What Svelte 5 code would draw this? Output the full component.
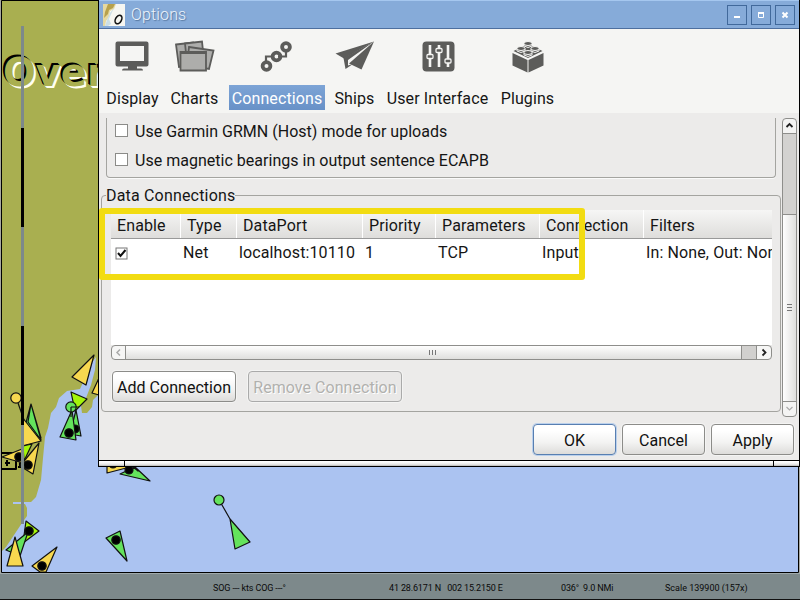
<script>
  const tabs = [
    { label: 'Display', icon: 'display', w: 55 },
    { label: 'Charts', icon: 'charts', w: 51 },
    { label: 'Connections', icon: 'connections', w: 96 },
    { label: 'Ships', icon: 'ships', w: 41 },
    { label: 'User Interface', icon: 'ui', w: 107 },
    { label: 'Plugins', icon: 'plugins', w: 55 }
  ];
  const active = 'Connections';
  const columns = [
    { name: 'Enable', value: '', w: 70 },
    { name: 'Type', value: 'Net', w: 56 },
    { name: 'DataPort', value: 'localhost:10110', w: 126 },
    { name: 'Priority', value: '1', w: 73 },
    { name: 'Parameters', value: 'TCP', w: 104 },
    { name: 'Connection', value: 'Input', w: 104 },
    { name: 'Filters', value: 'In: None, Out: None', w: 160 }
  ];
  const options = [
    'Use Garmin GRMN (Host) mode for uploads',
    'Use magnetic bearings in output sentence ECAPB'
  ];
</script>

<div class="screen">
  <svg class="map" width="800" height="573" viewBox="0 0 800 573">
    <rect width="800" height="573" fill="#a8a8a0" />
    <rect x="1" y="0" width="798" height="573" fill="#abc3f1" />
    <path fill="#a9af50" d="M1 0H99V394L93 400L92 407L87 413H82L81 406L86 398L91 385L95 370L96 357L91 364L86 376L80 389L67 391L59 398L56 407L51 413L48 428L45 437L43 458L41 480L36 497L31 502H13V504H25L27 508V516L22 523L14 535L6 547L1 552Z" />
    <g stroke="#111" stroke-width="1.2" stroke-linejoin="round">
      <g fill="none" stroke="#000" stroke-width="2"><path d="M2 453H16V469H2M5 463H10M7 460V466M20 466Q19 460 24 462M18 467H22" /></g>
      <path fill="#64e35c" d="M31 404L41 438L24 430ZM31 404L41 440L28 422Z" />
      <path fill="#f7d84f" d="M94 355L72 377L86 385ZM99 378L92 393L99 395Z" />
      <path fill="#a4f50b" d="M71 392L87 399L75 411Z" />
      <path fill="#64e35c" d="M76 410L81 436L70 434Z" /><circle cx="75" cy="429" r="4" fill="#000" />
      <path fill="#64e35c" d="M72 410L60 437L76 440Z" /><circle cx="69" cy="433" r="4.2" fill="#000" />
      <circle cx="71" cy="407" r="5.2" fill="#64e35c" /><path d="M71 407H79M71 407V417" />
      <path d="M18 403L24 420" /><circle cx="16" cy="398" r="5.2" fill="#f7d84f" />
      <path fill="#f7d84f" d="M22 417L41 441L22 446Z" />
      <path fill="#f7d84f" d="M39 443L33 474L20 466Z" />
      <path fill="#a4f50b" d="M23 446L32 444L24 461Z" />
      <path fill="#f7d84f" d="M2 457L22 449L23 463Z" />
      <circle cx="19" cy="457" r="4.2" fill="#000" /><circle cx="28" cy="465" r="4.2" fill="#000" />
      <path fill="#f7d84f" d="M107 460V473L130 467Z" /><circle cx="113" cy="464" r="4" fill="#000" />
      <path fill="#64e35c" d="M120 474L135 467L150 481ZM132 466L138 471Z" /><circle cx="129" cy="470" r="4" fill="#000" />
      <path fill="#64e35c" d="M222 505L230 519L250 542L235 549L230 519Z" /><circle cx="219" cy="500" r="5" fill="#64e35c" />
      <path fill="#64e35c" d="M120 531L106 538L127 561Z" /><circle cx="116" cy="540" r="4.2" fill="#000" />
      <path fill="#a4f50b" d="M26 521L39 531L23 543Z" />
      <path fill="#64e35c" d="M28 532L6 550L20 556Z" /><circle cx="29" cy="531" r="4.2" fill="#000" />
      <path fill="#f7d84f" d="M15 537L7 566H23Z" />
      <path fill="#f7d84f" d="M57 547L32 566L40 572H46Z" /><circle cx="42" cy="566" r="4.2" fill="#000" />
    </g>
    <path d="M1.5 572.5V.5H798.5V572.5Z" fill="none" stroke="#000" />
  </svg>
  <div class="place">Over</div>
  <svg class="scalebar" width="3" height="498">
    <rect width="3" height="498" fill="#7d898b" />
    <rect y="102" width="3" height="99" /><rect y="300" width="3" height="99" />
  </svg>

  <footer>
    <span class="sog">SOG --- kts COG ---°</span>
    <span class="pos">41 28.6171 N&nbsp;&nbsp; 002 15.2150 E</span>
    <span class="brg">036°&nbsp; 9.0 NMi</span>
    <span class="scale">Scale 139900 (157x)</span>
  </footer>

  <section class="window">
    <header>
      <svg class="logo" width="22" height="22" viewBox="0 0 22 22">
        <rect width="22" height="22" fill="#f6f6f1" />
        <path d="M0 0H13L11 5L7 7L6 13L3 17L2 22H0Z" fill="#e5d9a2" />
        <path d="M5 0H12L10 4L6 6L5 10L1 14L2 8Z" fill="#b7a14c" />
        <path d="M12 3L9 8L6 15L8 20L5 22H2L4 16L7 9Z" fill="#cbdfe6" />
        <ellipse cx="15.500" cy="15.500" rx="3" ry="4.600" transform="rotate(28 15.500 15.500)" fill="none" stroke="#111" stroke-width="1.6" />
      </svg>
      <span class="title">Options</span>
      <div class="controls">
        <button aria-label="Minimize"><svg width="18" height="18"><path d="M6 11H12" stroke="#fff" stroke-width="2" /></svg></button>
        <button aria-label="Maximize"><svg width="18" height="18"><path d="M6.5 7V11.5H11.5V7M6 7H12" fill="none" stroke="#fff" /><path d="M6 7H12" stroke="#fff" stroke-width="2" /></svg></button>
        <button aria-label="Close"><svg width="18" height="18"><path d="M6.5 6.5L11.5 11.5M11.5 6.5L6.5 11.5" stroke="#fff" stroke-width="2" /></svg></button>
      </div>
    </header>

    <nav>
      {#each tabs as tab}
        <div class="tab" style="width:{tab.w}px">
          <svg width="40" height="36" viewBox="0 0 40 36" fill="#5c5c5a">
            {#if tab.icon === 'display'}
              <path fill-rule="evenodd" d="M4.500 2.500H33.500Q35.500 2.500 35.500 4.500V25.500Q35.500 27.500 33.500 27.500H24V29.500H28Q30 29.500 30 31.500H9Q9 29.500 11 29.500H15V27.500H4.500Q2.500 27.500 2.500 25.500V4.500Q2.500 2.500 4.500 2.500ZM7 7V22H31V7Z" />
            {:else if tab.icon === 'charts'}
              <g fill="#adadab" stroke="#5c5c5a" stroke-width="1.800">
                <path d="M1 5.500L18 3.500L20 26L4 28Z" /><path d="M10 4.500L27 2.500L28 12L11 14Z" /><path d="M14 8L38.500 11.500L34 30L12 26Z" />
                <path d="M5.500 13H31V31.500H5.500Z" /><path d="M5 13.500H31.500" stroke-width="3" />
              </g>
            {:else if tab.icon === 'connections'}
              <g fill="none" stroke="#5c5c5a" stroke-width="3.8">
                <path d="M9 23V17.500H15M21 17.500H29V12" stroke-width="2.2" />
                <circle cx="9.500" cy="27" r="3.900" /><circle cx="19.500" cy="17.500" r="3.900" /><circle cx="29" cy="8" r="3.900" />
              </g>
            {:else if tab.icon === 'ships'}
              <path d="M39 2.500L.5 14.500L9 19.500Z" /><path d="M39 2.500L8.500 19L10.500 30L18 25L13 26.500L13 21Z" /><path d="M39 2.500L26.500 30.500L14 24.500Z" />
            {:else if tab.icon === 'ui'}
              <rect x="4.500" y="2.500" width="32" height="30" rx="4" />
              <path d="M12 6V28M21 6V28M30 6V28" stroke="#f5f5f3" stroke-width="2.600" />
              <g fill="#5c5c5a" stroke="#f5f5f3" stroke-width="1.300"><rect x="9" y="15.500" width="6" height="4" rx="1" /><rect x="18" y="9.500" width="6" height="4" rx="1" /><rect x="27" y="20" width="6" height="4" rx="1" /></g>
            {:else}
              <path d="M4.500 14L19.500 21V33.500L4.500 26.500ZM20.500 21L35.500 14V26.500L20.500 33.500ZM5.500 12L20 5L34.500 12L20 19Z" />
              <g stroke="#f5f5f3" stroke-width="1"><path d="M16 4.500V7Q20 10 24 7V4.500" /><ellipse cx="20" cy="4.500" rx="4" ry="2" /><path d="M9 9.500V12Q13 15 17 12V9.500" /><ellipse cx="13" cy="9.500" rx="4" ry="2" /><path d="M23 9.500V12Q27 15 31 12V9.500" /><ellipse cx="27" cy="9.500" rx="4" ry="2" /><path d="M16 13.500V16Q20 19 24 16V13.500" /><ellipse cx="20" cy="13.500" rx="4" ry="2" /></g>
            {/if}
          </svg>
          <span class="label" class:active={tab.label === active}>{tab.label}</span>
        </div>
      {/each}
    </nav>

    <div class="body">
      <div class="page">
        <div class="options">
          {#each options as text}
            <div class="option"><i class="check"></i><span>{text}</span></div>
          {/each}
        </div>
        <fieldset>
          <legend><span>Data Connections</span></legend>
          <div class="table">
            <div class="row head">
              {#each columns as c}<div class="cell" style="width:{c.w}px">{c.name}</div>{/each}
            </div>
            <div class="row data">
              {#each columns as c, i}
                <div class="cell" style="width:{c.w}px">
                  {#if i === 0}<svg width="13" height="13"><rect x="1" y="1" width="11" height="11" fill="#fff" stroke="#777" /><path d="M3 6L5.500 9L10.500 3" fill="none" stroke="#111" stroke-width="2" /></svg>{:else}{c.value}{/if}
                </div>
              {/each}
            </div>
          </div>
          <div class="hscroll">
            <div class="arrow"><svg width="13" height="13"><path d="M8 3.500L5 6.500L8 9.500" fill="none" stroke="#aaa" stroke-width="1.500" /></svg></div>
            <div class="hthumb"><svg width="9" height="6"><path d="M.5 0V5M3.500 0V5M6.500 0V5" stroke="#777" /></svg></div>
            <div class="htrack"></div>
            <div class="arrow right"><svg width="13" height="13"><path d="M5.500 3.500L8.500 6.500L5.500 9.500" fill="none" stroke="#222" stroke-width="1.800" /></svg></div>
          </div>
          <div class="actions">
            <button class="btn add">Add Connection</button>
            <button class="btn remove" disabled>Remove Connection</button>
          </div>
        </fieldset>
      </div>
      <div class="vscroll">
        <div class="varrow"><svg width="13" height="13"><path d="M3.500 8L6.500 5L9.500 8" fill="none" stroke="#222" stroke-width="1.800" /></svg></div>
        <div class="vtrack"></div>
        <div class="vthumb"><svg width="6" height="8"><path d="M0 .5H5M0 3.500H5M0 6.500H5" stroke="#777" /></svg></div>
        <div class="varrow"><svg width="13" height="13"><path d="M3.500 5L6.500 8L9.500 5" fill="none" stroke="#aaa" stroke-width="1.200" /></svg></div>
      </div>
    </div>

    <div class="buttons">
      <button class="btn ok">OK</button>
      <button class="btn">Cancel</button>
      <button class="btn">Apply</button>
    </div>
    <div class="grip"><i></i><i class="mid"></i><i></i></div>
  </section>
  <div class="highlight"></div>
</div>

<style>
  :global(body) { margin: 0; }
  .screen { position: relative; width: 800px; height: 600px; overflow: hidden; font: 16px/20px Roboto, "Liberation Sans", sans-serif; color: #151515; display: flex; flex-direction: column; }
  .screen * { box-sizing: border-box; }
  svg { display: block; flex: none; }
  .place { position: absolute; left: 3px; top: 50px; font: bold 38.5px/46px "DejaVu Sans", sans-serif; color: #a9af50; text-shadow: -1px -1px #000, -2px -2px #000, 1px 1px #fffff0, 2px 2px #fffff0; }
  .scalebar { position: absolute; left: 21px; top: 26px; }
  footer { height: 27px; background: #7d898b; border-top: 1px solid #a0aaac; border-bottom: 1px solid #111; display: flex; align-items: center; padding: 3px 0 0 213px; font-size: 9px; line-height: 12px; color: #0a0a0a; white-space: nowrap; }
  .sog { width: 176px; letter-spacing: -.13px; }
  .pos { width: 172px; letter-spacing: -.15px; }
  .brg { width: 104px; letter-spacing: -.15px; }

  .window { position: absolute; left: 98px; top: 0; width: 702px; height: 467px; border: solid #000; border-width: 0 1px 1px; background: #ecebea; display: flex; flex-direction: column; white-space: nowrap; }
  header { height: 29px; background: #86abd9; border-top: 1px solid #a5c7ef; border-bottom: 1px solid #4d6f9f; display: flex; align-items: center; padding-left: 4px; }
  .title { margin-left: 6px; color: #edf3fa; font-weight: 300; letter-spacing: .15px; text-shadow: 1px 1px 1px #57779f; }
  .controls { margin-left: auto; display: flex; gap: 4px; padding-right: 4px; }
  .controls button { width: 20px; height: 20px; padding: 0; background: #86abd9; border: 1px solid #41699b; }
  nav { height: 84px; background: #f5f5f3; display: flex; gap: 9px; padding: 10px 0 0 6px; }
  .tab { display: flex; flex-direction: column; align-items: center; }
  .label { margin-top: 10px; height: 25px; line-height: 27px; width: 100%; display: flex; justify-content: center; letter-spacing: .1px; }
  .label.active { background: linear-gradient(#7da4d6, #6891c7); color: #fff; }

  .body { height: 305px; display: flex; padding: 5px 2px 0 2px; justify-content: space-between; }
  .page { width: 680px; }
  .options { margin-left: 5px; width: 670px; height: 60px; border: 1px solid #a4a4a0; border-top: 0; border-radius: 0 0 4px 4px; box-shadow: 0 1px #fafafa; padding: 2px 0 0 8px; }
  .option { height: 29px; display: flex; align-items: center; gap: 7px; padding-bottom: 9px; letter-spacing: .02px; }
  .option span { padding-top: 4px; }
  .check { width: 13px; height: 13px; border: 1px solid #8b8b88; background: #fff; }
  fieldset { margin: 7px 0 0; width: 680px; height: 227px; min-width: 0; border: 1px solid #a4a4a0; border-radius: 4px; padding: 5px 8px 0 9px; }
  legend { margin-left: -5px; padding: 0; letter-spacing: .18px; }
  legend span { position: relative; top: 1px; }
  .table { width: 661px; height: 135px; background: #fff; overflow: hidden; }
  .row { display: flex; width: 700px; }
  .head { height: 29px; background: linear-gradient(#f6f6f5, #dedddb); border-bottom: 1px solid #999; }
  .head .cell { padding: 6px 0 0 6px; border-right: 1px solid #fff; letter-spacing: .12px; }
  .data { height: 28px; }
  .data .cell { padding: 4px 0 0 2px; letter-spacing: .12px; }
  .data .cell:first-child { padding: 8px 0 0 4px; }
  .cell { flex: none; }
  .hscroll { width: 661px; height: 15px; display: flex; border: 1px solid #8e8e8b; border-radius: 4px; overflow: hidden; background: #f6f6f5; }
  .arrow { width: 14px; border-right: 1px solid #8e8e8b; }
  .arrow.right { border: 0; }
  .hthumb { width: 616px; border-right: 1px solid #8e8e8b; background: linear-gradient(#fefefe, #dfdfdd); display: flex; align-items: center; justify-content: center; }
  .htrack { flex: 1; background: #d1d0ce; border-right: 1px solid #8e8e8b; }
  .actions { display: flex; gap: 12px; padding: 11px 0 0 1px; }
  .btn { width: 83px; height: 31px; padding: 2px 0 0; border: 1px solid #8c8c89; border-radius: 4px; background: linear-gradient(#fff 20%, #f3f3f2 60%, #dddcda); box-shadow: 0 0 0 1px #f4f4f3; font: inherit; color: #111; letter-spacing: .04px; white-space: nowrap; }
  .btn.add { width: 124px; }
  .btn.remove { width: 154px; color: #b1b1ae; background: #e9e8e7; border-color: #aaa; text-shadow: 1px 1px #fff; }
  .btn.ok { border-color: #587fb1; box-shadow: 0 0 0 1px #bad0ec; }
  .vscroll { width: 15px; height: 299px; display: flex; flex-direction: column; border: 1px solid #8e8e8b; border-radius: 4px; background: #f4f4f3; overflow: hidden; }
  .varrow { height: 14px; }
  .vtrack { height: 81px; background: #d3d2d0; border-top: 1px solid #8e8e8b; }
  .vthumb { flex: 1; border: solid #8e8e8b; border-width: 1px 0; background: linear-gradient(90deg, #fefefe, #dfdfdd); display: flex; align-items: center; justify-content: center; }
  .buttons { height: 42px; display: flex; justify-content: flex-end; gap: 6px; padding: 6px 5px 0 0; }
  .grip { height: 6px; margin-top: 0; border-top: 1px solid #000; display: flex; }
  .grip i { width: 25px; background: linear-gradient(#fff 20%, #e4e4e3 70%, #b5b5b3); }
  .grip .mid { flex: 1; border: solid #000; border-width: 0 1px; }
  .highlight { position: absolute; left: 99px; top: 208px; width: 486px; height: 72px; border: 6px solid #f2dc12; border-radius: 3px; }
</style>
